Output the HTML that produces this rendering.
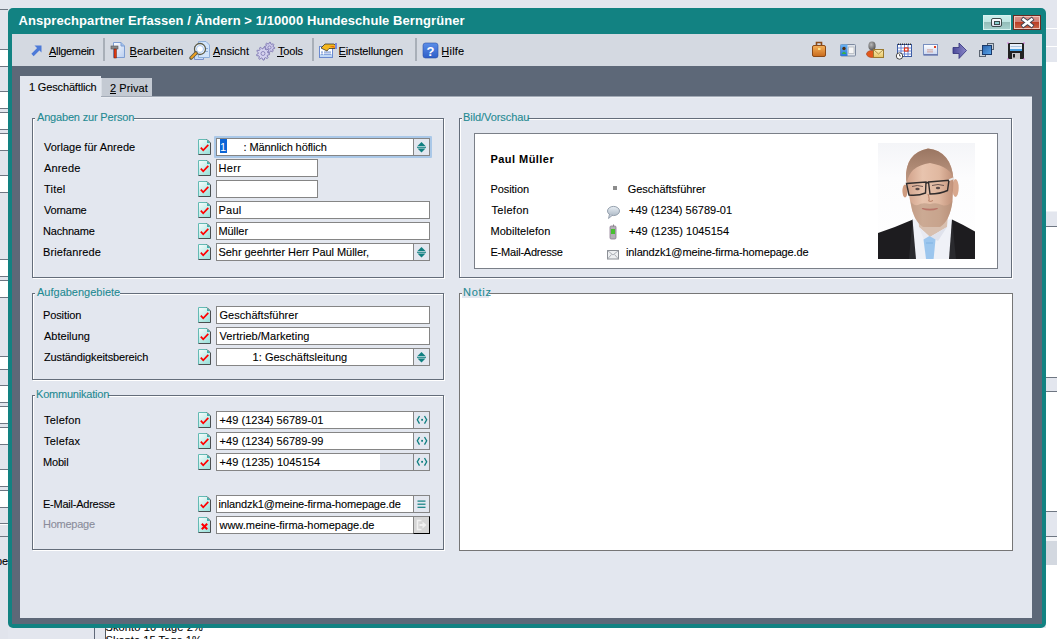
<!DOCTYPE html><html><head><meta charset="utf-8"><style>
html,body{margin:0;padding:0}
body{width:1057px;height:639px;position:relative;overflow:hidden;background:#e3e6ee;font-family:"Liberation Sans",sans-serif;font-size:11px}
.t{position:absolute;white-space:nowrap;line-height:13px;-webkit-text-stroke:0.1px currentColor}
svg{position:absolute;overflow:visible}
</style></head><body>
<div style="position:absolute;left:0px;top:0px;width:8px;height:9px;background:#e3e6ee;"></div>
<div style="position:absolute;left:0px;top:9px;width:8px;height:40px;background:#e1e4ec;"></div>
<div style="position:absolute;left:0px;top:49px;width:8px;height:17px;background:#fff;"></div>
<div style="position:absolute;left:0px;top:66px;width:8px;height:25px;background:#e1e4ec;"></div>
<div style="position:absolute;left:0px;top:91px;width:8px;height:17px;background:#fff;"></div>
<div style="position:absolute;left:0px;top:108px;width:8px;height:4px;background:#e1e4ec;"></div>
<div style="position:absolute;left:0px;top:112px;width:8px;height:17px;background:#fff;"></div>
<div style="position:absolute;left:0px;top:129px;width:8px;height:4px;background:#e1e4ec;"></div>
<div style="position:absolute;left:0px;top:133px;width:8px;height:17px;background:#fff;"></div>
<div style="position:absolute;left:0px;top:150px;width:8px;height:25px;background:#e1e4ec;"></div>
<div style="position:absolute;left:0px;top:175px;width:8px;height:17px;background:#fff;"></div>
<div style="position:absolute;left:0px;top:192px;width:8px;height:67px;background:#e1e4ec;"></div>
<div style="position:absolute;left:0px;top:259px;width:8px;height:17px;background:#fff;"></div>
<div style="position:absolute;left:0px;top:276px;width:8px;height:4px;background:#e1e4ec;"></div>
<div style="position:absolute;left:0px;top:280px;width:8px;height:17px;background:#fff;"></div>
<div style="position:absolute;left:0px;top:297px;width:8px;height:59px;background:#e1e4ec;"></div>
<div style="position:absolute;left:0px;top:356px;width:8px;height:13px;background:#fff;"></div>
<div style="position:absolute;left:0px;top:369px;width:8px;height:16px;background:#e1e4ec;"></div>
<div style="position:absolute;left:0px;top:385px;width:8px;height:17px;background:#fff;"></div>
<div style="position:absolute;left:0px;top:402px;width:8px;height:4px;background:#e1e4ec;"></div>
<div style="position:absolute;left:0px;top:406px;width:8px;height:17px;background:#fff;"></div>
<div style="position:absolute;left:0px;top:423px;width:8px;height:4px;background:#e1e4ec;"></div>
<div style="position:absolute;left:0px;top:427px;width:8px;height:17px;background:#fff;"></div>
<div style="position:absolute;left:0px;top:444px;width:8px;height:25px;background:#e1e4ec;"></div>
<div style="position:absolute;left:0px;top:469px;width:8px;height:17px;background:#fff;"></div>
<div style="position:absolute;left:0px;top:486px;width:8px;height:4px;background:#e1e4ec;"></div>
<div style="position:absolute;left:0px;top:490px;width:8px;height:17px;background:#fff;"></div>
<div style="position:absolute;left:0px;top:507px;width:8px;height:16px;background:#e1e4ec;"></div>
<div style="position:absolute;left:0px;top:523px;width:8px;height:13px;background:#e1e4ec;"></div>
<div style="position:absolute;left:0px;top:536px;width:8px;height:103px;background:#e1e4ec;"></div>
<div style="position:absolute;left:0px;top:9px;width:8px;height:1px;background:#6e7682;"></div>
<div style="position:absolute;left:0px;top:49px;width:8px;height:1px;background:#6e7682;"></div>
<div style="position:absolute;left:0px;top:66px;width:8px;height:1px;background:#6e7682;"></div>
<div style="position:absolute;left:0px;top:91px;width:8px;height:1px;background:#6e7682;"></div>
<div style="position:absolute;left:0px;top:108px;width:8px;height:1px;background:#6e7682;"></div>
<div style="position:absolute;left:0px;top:112px;width:8px;height:1px;background:#6e7682;"></div>
<div style="position:absolute;left:0px;top:129px;width:8px;height:1px;background:#6e7682;"></div>
<div style="position:absolute;left:0px;top:133px;width:8px;height:1px;background:#6e7682;"></div>
<div style="position:absolute;left:0px;top:150px;width:8px;height:1px;background:#6e7682;"></div>
<div style="position:absolute;left:0px;top:175px;width:8px;height:1px;background:#6e7682;"></div>
<div style="position:absolute;left:0px;top:192px;width:8px;height:1px;background:#6e7682;"></div>
<div style="position:absolute;left:0px;top:259px;width:8px;height:1px;background:#6e7682;"></div>
<div style="position:absolute;left:0px;top:276px;width:8px;height:1px;background:#6e7682;"></div>
<div style="position:absolute;left:0px;top:280px;width:8px;height:1px;background:#6e7682;"></div>
<div style="position:absolute;left:0px;top:297px;width:8px;height:1px;background:#6e7682;"></div>
<div style="position:absolute;left:0px;top:356px;width:8px;height:1px;background:#6e7682;"></div>
<div style="position:absolute;left:0px;top:369px;width:8px;height:1px;background:#6e7682;"></div>
<div style="position:absolute;left:0px;top:385px;width:8px;height:1px;background:#6e7682;"></div>
<div style="position:absolute;left:0px;top:402px;width:8px;height:1px;background:#6e7682;"></div>
<div style="position:absolute;left:0px;top:406px;width:8px;height:1px;background:#6e7682;"></div>
<div style="position:absolute;left:0px;top:423px;width:8px;height:1px;background:#6e7682;"></div>
<div style="position:absolute;left:0px;top:427px;width:8px;height:1px;background:#6e7682;"></div>
<div style="position:absolute;left:0px;top:444px;width:8px;height:1px;background:#6e7682;"></div>
<div style="position:absolute;left:0px;top:469px;width:8px;height:1px;background:#6e7682;"></div>
<div style="position:absolute;left:0px;top:486px;width:8px;height:1px;background:#6e7682;"></div>
<div style="position:absolute;left:0px;top:490px;width:8px;height:1px;background:#6e7682;"></div>
<div style="position:absolute;left:0px;top:507px;width:8px;height:1px;background:#6e7682;"></div>
<div style="position:absolute;left:0px;top:523px;width:8px;height:1px;background:#6e7682;"></div>
<div style="position:absolute;left:0px;top:536px;width:8px;height:1px;background:#6e7682;"></div>
<div style="position:absolute;left:0px;top:524px;width:8px;height:1px;background:#fff;"></div>
<div class="t" style="left:-4.00px;top:555.00px;color:#000;font-size:11px;font-weight:normal;letter-spacing:0.000px;">pe</div>
<div style="position:absolute;left:1046px;top:0px;width:11px;height:62px;background:#e3e6ee;"></div>
<div style="position:absolute;left:1046px;top:62px;width:11px;height:149px;background:#fff;"></div>
<div style="position:absolute;left:1046px;top:211px;width:11px;height:15px;background:#e3e6ee;"></div>
<div style="position:absolute;left:1046px;top:227px;width:11px;height:150px;background:#fff;"></div>
<div style="position:absolute;left:1046px;top:378px;width:11px;height:13px;background:#e3e6ee;"></div>
<div style="position:absolute;left:1046px;top:392px;width:11px;height:119px;background:#fff;"></div>
<div style="position:absolute;left:1046px;top:512px;width:11px;height:24px;background:#e3e6ee;"></div>
<div style="position:absolute;left:1046px;top:537px;width:11px;height:4px;background:#f4f5f8;"></div>
<div style="position:absolute;left:1046px;top:541px;width:11px;height:24px;background:#d3d8e0;"></div>
<div style="position:absolute;left:1046px;top:565px;width:11px;height:74px;background:#fff;"></div>
<div style="position:absolute;left:1046px;top:28px;width:11px;height:1px;background:#fff;"></div>
<div style="position:absolute;left:1046px;top:46px;width:11px;height:1px;background:#fff;"></div>
<div style="position:absolute;left:1046px;top:211px;width:11px;height:1px;background:#f0f2f6;"></div>
<div style="position:absolute;left:1046px;top:226px;width:11px;height:1px;background:#6e7682;"></div>
<div style="position:absolute;left:1046px;top:377px;width:11px;height:1px;background:#6e7682;"></div>
<div style="position:absolute;left:1046px;top:391px;width:11px;height:1px;background:#6e7682;"></div>
<div style="position:absolute;left:1046px;top:511px;width:11px;height:1px;background:#6e7682;"></div>
<div style="position:absolute;left:1046px;top:536px;width:11px;height:1px;background:#6e7682;"></div>
<div style="position:absolute;left:105px;top:628px;width:952px;height:11px;background:#fff;"></div>
<div style="position:absolute;left:94px;top:628px;width:1px;height:11px;background:#606878;"></div>
<div style="position:absolute;left:105px;top:628px;width:1px;height:11px;background:#505860;"></div>
<div class="t" style="left:105.50px;top:621.00px;color:#000;font-size:11px;font-weight:normal;letter-spacing:0.125px;">Skonto 10 Tage 2%</div>
<div class="t" style="left:105.50px;top:634.00px;color:#000;font-size:11px;font-weight:normal;letter-spacing:0.062px;">Skonto 15 Tage 1%</div>
<div style="position:absolute;left:8px;top:8px;width:1038px;height:620px;background:#128282;border-radius:5px"></div>
<div style="position:absolute;left:12px;top:34px;width:1030px;height:32px;background:#d4d9e1;"></div>
<div style="position:absolute;left:12px;top:66px;width:1030px;height:558px;background:#5d6878;"></div>
<div style="position:absolute;left:20px;top:96px;width:1012px;height:522px;background:#e3e7ef;"></div>
<div style="position:absolute;left:20px;top:76px;width:81px;height:20px;background:#e3e7ef;"></div>
<div style="position:absolute;left:101px;top:78px;width:51px;height:18px;background:#c4cad3;"></div>
<div style="position:absolute;left:101px;top:96px;width:931px;height:1px;background:#a2aab6;"></div>
<div style="position:absolute;left:101px;top:97px;width:931px;height:1px;background:#eaedf3;"></div>
<div style="position:absolute;left:101px;top:78px;width:1px;height:18px;background:#d8dde4;"></div>
<div class="t" style="left:29.00px;top:81.00px;color:#000;font-size:11px;font-weight:normal;letter-spacing:-0.154px;">1 Geschäftlich</div>
<div class="t" style="left:110.00px;top:82.00px;color:#000;font-size:11px;font-weight:normal;letter-spacing:0.071px;">2 Privat</div>
<div style="position:absolute;left:110px;top:93px;width:6px;height:1px;background:#000;"></div>
<div class="t" style="left:18.50px;top:14.00px;color:#fff;font-size:13px;font-weight:bold;letter-spacing:0.077px;-webkit-text-stroke:0">Ansprechpartner Erfassen / Ändern &gt; 1/10000 Hundeschule Berngrüner</div>
<div style="position:absolute;left:983px;top:15px;width:26px;height:13px;border:1px solid #d6f2f0;background:linear-gradient(#c9eeeb 0,#c0e6e3 45%,#93bdb9 50%,#a6d0cc 100%)"></div>
<div style="position:absolute;left:991px;top:18px;width:9px;height:7px;border:1px solid #3c4a4a;border-radius:2px;background:linear-gradient(#fff,#dde)"></div>
<div style="position:absolute;left:994px;top:21px;width:4px;height:2px;border:1px solid #3c4a4a;background:#8cc"></div>
<div style="position:absolute;left:1013px;top:15px;width:26px;height:13px;border:1px solid #6b2a22;box-shadow:inset 0 0 0 1px #f2c6bc;background:linear-gradient(#dc958c 0,#d08078 45%,#bb3e26 50%,#c8664c 100%)"></div>
<svg style="left:1022px;top:18px" width="11" height="9" viewBox="0 0 11 9"><path d="M1.5 1.5 L9.5 7.5 M9.5 1.5 L1.5 7.5" stroke="#3a4050" stroke-width="4.2" stroke-linecap="square"/><path d="M1.5 1.5 L9.5 7.5 M9.5 1.5 L1.5 7.5" stroke="#fff" stroke-width="2.6" stroke-linecap="square"/></svg>
<div style="position:absolute;left:103px;top:38px;width:2px;height:23px;background:#a8afb8;"></div>
<div style="position:absolute;left:312px;top:38px;width:2px;height:23px;background:#a8afb8;"></div>
<div style="position:absolute;left:415px;top:38px;width:2px;height:23px;background:#a8afb8;"></div>
<div class="t" style="left:49.00px;top:45.00px;color:#000;font-size:11px;font-weight:normal;letter-spacing:-0.325px;">Allgemein</div>
<div style="position:absolute;left:49px;top:56px;width:7px;height:1px;background:#000;"></div>
<div class="t" style="left:129.50px;top:45.00px;color:#000;font-size:11px;font-weight:normal;letter-spacing:0.067px;">Bearbeiten</div>
<div style="position:absolute;left:130px;top:56px;width:7px;height:1px;background:#000;"></div>
<div class="t" style="left:213.00px;top:45.00px;color:#000;font-size:11px;font-weight:normal;letter-spacing:-0.017px;">Ansicht</div>
<div style="position:absolute;left:213px;top:56px;width:7px;height:1px;background:#000;"></div>
<div class="t" style="left:278.00px;top:45.00px;color:#000;font-size:11px;font-weight:normal;letter-spacing:-0.200px;">Tools</div>
<div style="position:absolute;left:277px;top:56px;width:7px;height:1px;background:#000;"></div>
<div class="t" style="left:338.50px;top:45.00px;color:#000;font-size:11px;font-weight:normal;letter-spacing:-0.117px;">Einstellungen</div>
<div style="position:absolute;left:339px;top:56px;width:7px;height:1px;background:#000;"></div>
<div class="t" style="left:441.30px;top:45.00px;color:#000;font-size:11px;font-weight:normal;letter-spacing:0.225px;">Hilfe</div>
<div style="position:absolute;left:442px;top:56px;width:7px;height:1px;background:#000;"></div>
<svg style="left:30px;top:44px" width="13" height="13" viewBox="0 0 13 13"><path d="M2.5 11 L10 3.5" stroke="#4d7ad8" stroke-width="3.2" fill="none"/><path d="M4.5 1.5 H11.5 V8.5Z" fill="#4d7ad8"/></svg>
<svg style="left:110px;top:41px" width="17" height="18" viewBox="0 0 17 18"><defs><linearGradient id="bd" x1="0" y1="0" x2="1" y2="1"><stop offset="0" stop-color="#ffffff"/><stop offset="1" stop-color="#b8cef0"/></linearGradient></defs>
<path d="M3.5 1.5 H11 L14.5 5 V16.5 H3.5Z" fill="url(#bd)" stroke="#7e9ed2"/><path d="M11 1.5 V5 H14.5" fill="#9fc0ee" stroke="#7e9ed2"/>
<rect x="1" y="5" width="7" height="3" fill="#8a8a8a" stroke="#555" stroke-width="0.6"/><rect x="4" y="8" width="2.4" height="9" fill="#e03a10" stroke="#6a1a08" stroke-width="0.5"/></svg>
<svg style="left:189px;top:40px" width="24" height="21" viewBox="0 0 24 21"><path d="M5.5 6.5 H14.5 V19.5 H5.5Z" fill="#c4daf6" stroke="#7c90c8"/><path d="M9.5 1.5 H17 L20.5 5 V17.5 H9.5Z" fill="#d2e4fa" stroke="#8eaed8"/>
<rect x="16" y="8" width="3" height="1" fill="#8eaed8"/><rect x="16" y="11" width="3" height="1" fill="#8eaed8"/>
<circle cx="11" cy="9" r="5.5" fill="#f4f8ff" stroke="#5a5a48" stroke-width="1.3"/><circle cx="11" cy="9" r="3.5" fill="#fff" stroke="#a8c8f0" stroke-width="1"/>
<path d="M2 18 L7 13" stroke="#5a5a48" stroke-width="3.6" stroke-linecap="round"/><path d="M2.4 17.6 L6.8 13.2" stroke="#f0a020" stroke-width="2" stroke-linecap="round"/></svg>
<svg style="left:255px;top:40px" width="22" height="22" viewBox="0 0 22 22"><polygon points="19.70,7.50 19.60,8.51 17.96,8.93 17.61,9.58 18.18,11.18 17.39,11.82 15.93,10.96 15.23,11.17 14.50,12.70 13.49,12.60 13.07,10.96 12.42,10.61 10.82,11.18 10.18,10.39 11.04,8.93 10.83,8.23 9.30,7.50 9.40,6.49 11.04,6.07 11.39,5.42 10.82,3.82 11.61,3.18 13.07,4.04 13.77,3.83 14.50,2.30 15.51,2.40 15.93,4.04 16.58,4.39 18.18,3.82 18.82,4.61 17.96,6.07 18.17,6.77" fill="#cdcaea" stroke="#7a74b0" stroke-width="0.9"/><circle cx="14.5" cy="7.5" r="1.56" fill="#d8d6ee" stroke="#7a74b0" stroke-width="0.8"/><polygon points="14.60,13.50 14.50,14.65 12.47,15.13 12.12,15.88 13.06,17.74 12.24,18.56 10.38,17.62 9.63,17.97 9.15,20.00 8.00,20.10 7.17,18.18 6.37,17.97 4.70,19.22 3.76,18.56 4.36,16.55 3.88,15.88 1.80,15.76 1.50,14.65 3.25,13.50 3.32,12.67 1.80,11.24 2.28,10.20 4.36,10.45 4.95,9.86 4.70,7.78 5.74,7.30 7.17,8.82 8.00,8.75 9.15,7.00 10.26,7.30 10.38,9.38 11.05,9.86 13.06,9.26 13.72,10.20 12.47,11.87 12.68,12.67" fill="#d4d2ee" stroke="#7a74b0" stroke-width="0.9"/><circle cx="8" cy="13.5" r="1.98" fill="#d8d6ee" stroke="#7a74b0" stroke-width="0.8"/></svg>
<svg style="left:318px;top:42px" width="20" height="17" viewBox="0 0 20 17"><rect x="1.5" y="4.5" width="13" height="11" fill="#fff" stroke="#6a8ad0"/><rect x="2" y="12" width="12" height="3" fill="#c0d8f4"/>
<rect x="3" y="9.5" width="2" height="1.2" fill="#7a9ad8"/><rect x="6" y="9.5" width="7" height="1.2" fill="#7a9ad8"/><rect x="3" y="11.6" width="2" height="1.2" fill="#7a9ad8"/><rect x="6" y="11.6" width="7" height="1.2" fill="#7a9ad8"/>
<path d="M3 6 L7 2 H16 L18 4 V6.5 H11 L9 9 Z" fill="#f4b820" stroke="#222" stroke-width="0.7"/><path d="M11 4 L16 4 L17 6" fill="#e86a10"/><rect x="17" y="1" width="2" height="6" fill="#7a8ae0"/></svg>
<svg style="left:422px;top:42px" width="17" height="17" viewBox="0 0 17 17"><defs><linearGradient id="hg" x1="0" y1="0" x2="0" y2="1"><stop offset="0" stop-color="#5c8ee8"/><stop offset="1" stop-color="#2f5fc8"/></linearGradient></defs>
<rect x="1" y="1" width="15" height="15" rx="2.5" fill="url(#hg)" stroke="#2a50a8" stroke-width="0.6"/>
<text x="8.5" y="13.6" text-anchor="middle" font-family="Liberation Sans" font-weight="bold" font-size="13" fill="#fff">?</text></svg>
<svg style="left:810px;top:40px" width="18" height="19" viewBox="0 0 18 19"><defs><linearGradient id="bc" x1="0" y1="0" x2="0" y2="1"><stop offset="0" stop-color="#f6b25a"/><stop offset="1" stop-color="#c86a1c"/></linearGradient></defs>
<path d="M6.5 5 V2.5 H11.5 V5" stroke="#8a4a18" stroke-width="1.6" fill="none"/>
<rect x="2.5" y="5.5" width="13" height="11" rx="1.5" fill="url(#bc)" stroke="#8a4a18"/><rect x="8" y="8" width="2.5" height="2" fill="#f8e088"/></svg>
<svg style="left:839px;top:43px" width="18" height="15" viewBox="0 0 18 15"><defs><linearGradient id="cd" x1="0" y1="0" x2="0" y2="1"><stop offset="0" stop-color="#6ab4f4"/><stop offset="1" stop-color="#2a78d8"/></linearGradient></defs>
<rect x="1.5" y="1.5" width="15" height="11.5" rx="1" fill="#dfe3ea" stroke="#7d8aa0"/><rect x="1.5" y="1.5" width="7" height="11.5" fill="url(#cd)"/>
<circle cx="5" cy="5.5" r="1.7" fill="#503010"/><path d="M2.6 11 Q5 6.5 7.4 11Z" fill="#38b048"/><rect x="9.5" y="4" width="5.5" height="6.5" fill="#f6f6f6" stroke="#a0a8b0" stroke-width="0.6"/></svg>
<svg style="left:865px;top:40px" width="20" height="20" viewBox="0 0 20 20"><defs><linearGradient id="ev" x1="0" y1="0" x2="0" y2="1"><stop offset="0" stop-color="#fcefb8"/><stop offset="1" stop-color="#e6c464"/></linearGradient>
<radialGradient id="ph" cx="0.4" cy="0.35" r="0.7"><stop offset="0" stop-color="#b8b8b8"/><stop offset="1" stop-color="#505050"/></radialGradient></defs>
<ellipse cx="7" cy="14" rx="5.5" ry="3.5" fill="#e2581c" stroke="#a03a10" stroke-width="0.6"/>
<ellipse cx="7" cy="6" rx="3.6" ry="4.4" fill="url(#ph)"/>
<rect x="8.5" y="9.5" width="10" height="8" fill="url(#ev)" stroke="#9a7a30"/><path d="M8.5 9.5 L13.5 14 L18.5 9.5" stroke="#9a7a30" fill="none" stroke-width="0.8"/></svg>
<svg style="left:895px;top:41px" width="18" height="19" viewBox="0 0 18 19"><rect x="2.5" y="3.5" width="14" height="12" fill="#fff" stroke="#3a5aa0"/>
<path d="M2.5 7 H16.5 M2.5 10 H16.5 M2.5 13 H16.5 M6 3.5 V15.5 M9.5 3.5 V15.5 M13 3.5 V15.5" stroke="#5a7ad0" stroke-width="0.9"/>
<path d="M3.5 2.5 V4 M5.5 2.5 V4 M7.5 2.5 V4 M9.5 2.5 V4 M11.5 2.5 V4 M13.5 2.5 V4 M15.5 2.5 V4" stroke="#222" stroke-width="0.9"/>
<rect x="9.5" y="7" width="3.5" height="3" fill="#fff" stroke="#e03010" stroke-width="1.2"/>
<circle cx="4.5" cy="15" r="3.2" fill="#fff" stroke="#333" stroke-width="0.9"/><path d="M4.5 13 V15 H6" stroke="#333" stroke-width="0.7" fill="none"/></svg>
<svg style="left:922px;top:43px" width="18" height="15" viewBox="0 0 18 15"><defs><linearGradient id="lt" x1="0" y1="0" x2="0" y2="1"><stop offset="0" stop-color="#ffffff"/><stop offset="1" stop-color="#c8d6f0"/></linearGradient></defs>
<rect x="1.5" y="1.5" width="14" height="10.5" fill="url(#lt)" stroke="#7890c0"/><rect x="2" y="11" width="14" height="1.5" fill="#6a7ab0"/>
<rect x="12" y="3" width="2" height="2" fill="#e04020"/><rect x="5" y="6.5" width="6" height="0.8" fill="#d09080"/><rect x="5" y="8.5" width="6" height="0.8" fill="#d09080"/></svg>
<svg style="left:952px;top:42px" width="16" height="18" viewBox="0 0 16 18"><defs><linearGradient id="ar" x1="0" y1="0" x2="1" y2="0"><stop offset="0" stop-color="#4a4a98"/><stop offset="1" stop-color="#8a86c8"/></linearGradient></defs>
<path d="M1 5.5 H7 V1 L14.5 8.5 L7 16.5 V11.5 H1Z" fill="url(#ar)" stroke="#30307a" stroke-width="0.8"/></svg>
<svg style="left:978px;top:42px" width="18" height="16" viewBox="0 0 18 16"><rect x="9.5" y="1.5" width="6" height="6" fill="#c8d0d8" stroke="#5a6470"/><rect x="1.5" y="8.5" width="6" height="6" fill="#c8d0d8" stroke="#5a6470"/>
<defs><linearGradient id="wb" x1="0" y1="0" x2="1" y2="1"><stop offset="0" stop-color="#2a60a8"/><stop offset="1" stop-color="#5aa8ec"/></linearGradient></defs>
<rect x="4.5" y="3.5" width="9" height="9" fill="url(#wb)" stroke="#1a3a6a"/></svg>
<svg style="left:1007px;top:42px" width="18" height="18" viewBox="0 0 18 18"><rect x="1" y="1" width="16" height="16" rx="1" fill="#222"/><rect x="3" y="2" width="12" height="7" fill="#e8f0fa"/><rect x="3" y="7" width="12" height="2" fill="#48a0e0"/>
<rect x="3.5" y="4" width="11" height="0.8" fill="#9ab8d8"/><rect x="5" y="11" width="8" height="6" fill="#c8c8c8"/><rect x="6" y="12" width="2" height="3.5" fill="#222"/>
<rect x="0.5" y="0.5" width="1" height="1" fill="#e020e0"/><rect x="16.5" y="16.5" width="1" height="1" fill="#e020e0"/><rect x="0.5" y="16.5" width="1" height="1" fill="#e020e0"/><rect x="16.5" y="0.5" width="1" height="1" fill="#e020e0"/></svg>
<div style="position:absolute;left:32px;top:118px;width:410px;height:158px;border:1px solid #646d7a;box-shadow:inset 1px 1px 0 #fff, 1px 1px 0 #fff"></div>
<div style="position:absolute;left:35px;top:112px;width:99px;height:9px;background:#e3e7ef;"></div>
<div class="t" style="left:37.00px;top:111.00px;color:#1f8a92;font-size:11px;font-weight:normal;letter-spacing:-0.176px;-webkit-text-stroke:0.1px currentColor">Angaben zur Person</div>
<div style="position:absolute;left:32px;top:293px;width:410px;height:85px;border:1px solid #646d7a;box-shadow:inset 1px 1px 0 #fff, 1px 1px 0 #fff"></div>
<div style="position:absolute;left:35px;top:287px;width:85px;height:9px;background:#e3e7ef;"></div>
<div class="t" style="left:37.00px;top:286.00px;color:#1f8a92;font-size:11px;font-weight:normal;letter-spacing:0.000px;-webkit-text-stroke:0.1px currentColor">Aufgabengebiete</div>
<div style="position:absolute;left:32px;top:395px;width:410px;height:153px;border:1px solid #646d7a;box-shadow:inset 1px 1px 0 #fff, 1px 1px 0 #fff"></div>
<div style="position:absolute;left:35px;top:389px;width:73px;height:9px;background:#e3e7ef;"></div>
<div class="t" style="left:36.00px;top:388.00px;color:#1f8a92;font-size:11px;font-weight:normal;letter-spacing:-0.208px;-webkit-text-stroke:0.1px currentColor">Kommunikation</div>
<div style="position:absolute;left:459px;top:118px;width:551px;height:158px;border:1px solid #646d7a;box-shadow:inset 1px 1px 0 #fff, 1px 1px 0 #fff"></div>
<div style="position:absolute;left:462px;top:112px;width:66px;height:9px;background:#e3e7ef;"></div>
<div class="t" style="left:463.00px;top:111.00px;color:#1f8a92;font-size:11px;font-weight:normal;letter-spacing:-0.067px;-webkit-text-stroke:0.1px currentColor">Bild/Vorschau</div>
<div style="position:absolute;left:459px;top:293px;width:552px;height:256px;border:1px solid #767676;background:#fff"></div>
<div style="position:absolute;left:462px;top:287px;width:27px;height:11px;background:#e3e7ef;"></div>
<div class="t" style="left:463.00px;top:286.00px;color:#1f8a92;font-size:11px;font-weight:normal;letter-spacing:0.750px;-webkit-text-stroke:0.1px currentColor">Notiz</div>
<svg width="0" height="0"><defs><linearGradient id="cg" x1="0" y1="0" x2="0.6" y2="1"><stop offset="0" stop-color="#fdfefe"/><stop offset="1" stop-color="#9fe2dc"/></linearGradient></defs></svg>
<div style="position:absolute;left:214px;top:136px;width:218px;height:22px;background:#aac8e8;border-radius:1px"></div>
<div class="t" style="left:44.00px;top:140.50px;color:#000;font-size:11px;font-weight:normal;letter-spacing:0.000px;">Vorlage für Anrede</div>
<svg style="left:198px;top:139px" width="14" height="17" viewBox="0 0 14 17">
<path d="M0 0 H9 L13 4 V16 H0Z" fill="url(#cg)"/>
<path d="M0.5 15.5 V0.5 H9" stroke="#64bab4" fill="none"/>
<path d="M9 0.5 L12.5 4 V15.5 H0.5" stroke="#4a4e50" fill="none"/>
<path d="M9 1 L12 4 H9Z" fill="#3ab2ae"/>
<path d="M2.8 8.6 L5.2 11.3 L10.3 5.8" stroke="#f00" stroke-width="1.7" fill="none"/></svg>
<div style="position:absolute;left:216px;top:138px;width:212px;height:16px;border:1px solid #858585;background:#fff"></div>
<div style="position:absolute;left:413px;top:138px;width:15px;height:16px;border:1px solid #858585;background:#e3e7ef"></div>
<svg style="left:414px;top:139px" width="16" height="16" viewBox="0 0 16 16"><path d="M3.5 7 L7.5 3 L11.5 7Z M3.5 9.5 L7.5 13.5 L11.5 9.5Z" fill="#0f7f80"/><rect x="3" y="7.7" width="9" height="1.1" fill="#0f7f80"/></svg>
<div style="position:absolute;left:220px;top:139px;width:7px;height:14px;background:#0a64d6;"></div>
<div class="t" style="left:220.00px;top:140.50px;color:#fff;font-size:11px;font-weight:normal;letter-spacing:0.000px;-webkit-text-stroke:0">1</div>
<div class="t" style="left:243.60px;top:140.50px;color:#000;font-size:11px;font-weight:normal;letter-spacing:-0.106px;">: Männlich höflich</div>
<div class="t" style="left:44.00px;top:161.50px;color:#000;font-size:11px;font-weight:normal;letter-spacing:0.160px;">Anrede</div>
<svg style="left:198px;top:160px" width="14" height="17" viewBox="0 0 14 17">
<path d="M0 0 H9 L13 4 V16 H0Z" fill="url(#cg)"/>
<path d="M0.5 15.5 V0.5 H9" stroke="#64bab4" fill="none"/>
<path d="M9 0.5 L12.5 4 V15.5 H0.5" stroke="#4a4e50" fill="none"/>
<path d="M9 1 L12 4 H9Z" fill="#3ab2ae"/>
<path d="M2.8 8.6 L5.2 11.3 L10.3 5.8" stroke="#f00" stroke-width="1.7" fill="none"/></svg>
<div style="position:absolute;left:216px;top:159px;width:100px;height:16px;border:1px solid #858585;background:#fff"></div>
<div class="t" style="left:218.50px;top:161.50px;color:#000;font-size:11px;font-weight:normal;letter-spacing:0.367px;">Herr</div>
<div class="t" style="left:44.00px;top:182.50px;color:#000;font-size:11px;font-weight:normal;letter-spacing:0.200px;">Titel</div>
<svg style="left:198px;top:181px" width="14" height="17" viewBox="0 0 14 17">
<path d="M0 0 H9 L13 4 V16 H0Z" fill="url(#cg)"/>
<path d="M0.5 15.5 V0.5 H9" stroke="#64bab4" fill="none"/>
<path d="M9 0.5 L12.5 4 V15.5 H0.5" stroke="#4a4e50" fill="none"/>
<path d="M9 1 L12 4 H9Z" fill="#3ab2ae"/>
<path d="M2.8 8.6 L5.2 11.3 L10.3 5.8" stroke="#f00" stroke-width="1.7" fill="none"/></svg>
<div style="position:absolute;left:216px;top:180px;width:100px;height:16px;border:1px solid #858585;background:#fff"></div>
<div class="t" style="left:44.00px;top:203.50px;color:#000;font-size:11px;font-weight:normal;letter-spacing:-0.217px;">Vorname</div>
<svg style="left:198px;top:202px" width="14" height="17" viewBox="0 0 14 17">
<path d="M0 0 H9 L13 4 V16 H0Z" fill="url(#cg)"/>
<path d="M0.5 15.5 V0.5 H9" stroke="#64bab4" fill="none"/>
<path d="M9 0.5 L12.5 4 V15.5 H0.5" stroke="#4a4e50" fill="none"/>
<path d="M9 1 L12 4 H9Z" fill="#3ab2ae"/>
<path d="M2.8 8.6 L5.2 11.3 L10.3 5.8" stroke="#f00" stroke-width="1.7" fill="none"/></svg>
<div style="position:absolute;left:216px;top:201px;width:212px;height:16px;border:1px solid #858585;background:#fff"></div>
<div class="t" style="left:218.50px;top:203.50px;color:#000;font-size:11px;font-weight:normal;letter-spacing:0.233px;">Paul</div>
<div class="t" style="left:43.00px;top:224.50px;color:#000;font-size:11px;font-weight:normal;letter-spacing:-0.200px;">Nachname</div>
<svg style="left:198px;top:223px" width="14" height="17" viewBox="0 0 14 17">
<path d="M0 0 H9 L13 4 V16 H0Z" fill="url(#cg)"/>
<path d="M0.5 15.5 V0.5 H9" stroke="#64bab4" fill="none"/>
<path d="M9 0.5 L12.5 4 V15.5 H0.5" stroke="#4a4e50" fill="none"/>
<path d="M9 1 L12 4 H9Z" fill="#3ab2ae"/>
<path d="M2.8 8.6 L5.2 11.3 L10.3 5.8" stroke="#f00" stroke-width="1.7" fill="none"/></svg>
<div style="position:absolute;left:216px;top:222px;width:212px;height:16px;border:1px solid #858585;background:#fff"></div>
<div class="t" style="left:218.50px;top:224.50px;color:#000;font-size:11px;font-weight:normal;letter-spacing:-0.080px;">Müller</div>
<div class="t" style="left:43.00px;top:245.50px;color:#000;font-size:11px;font-weight:normal;letter-spacing:0.100px;">Briefanrede</div>
<svg style="left:198px;top:244px" width="14" height="17" viewBox="0 0 14 17">
<path d="M0 0 H9 L13 4 V16 H0Z" fill="url(#cg)"/>
<path d="M0.5 15.5 V0.5 H9" stroke="#64bab4" fill="none"/>
<path d="M9 0.5 L12.5 4 V15.5 H0.5" stroke="#4a4e50" fill="none"/>
<path d="M9 1 L12 4 H9Z" fill="#3ab2ae"/>
<path d="M2.8 8.6 L5.2 11.3 L10.3 5.8" stroke="#f00" stroke-width="1.7" fill="none"/></svg>
<div style="position:absolute;left:216px;top:243px;width:212px;height:16px;border:1px solid #858585;background:#fff"></div>
<div style="position:absolute;left:413px;top:243px;width:15px;height:16px;border:1px solid #858585;background:#e3e7ef"></div>
<svg style="left:414px;top:244px" width="16" height="16" viewBox="0 0 16 16"><path d="M3.5 7 L7.5 3 L11.5 7Z M3.5 9.5 L7.5 13.5 L11.5 9.5Z" fill="#0f7f80"/><rect x="3" y="7.7" width="9" height="1.1" fill="#0f7f80"/></svg>
<div class="t" style="left:218.50px;top:245.50px;color:#000;font-size:11px;font-weight:normal;letter-spacing:-0.057px;">Sehr geehrter Herr Paul Müller,</div>
<div class="t" style="left:43.00px;top:308.50px;color:#000;font-size:11px;font-weight:normal;letter-spacing:-0.114px;">Position</div>
<svg style="left:198px;top:307px" width="14" height="17" viewBox="0 0 14 17">
<path d="M0 0 H9 L13 4 V16 H0Z" fill="url(#cg)"/>
<path d="M0.5 15.5 V0.5 H9" stroke="#64bab4" fill="none"/>
<path d="M9 0.5 L12.5 4 V15.5 H0.5" stroke="#4a4e50" fill="none"/>
<path d="M9 1 L12 4 H9Z" fill="#3ab2ae"/>
<path d="M2.8 8.6 L5.2 11.3 L10.3 5.8" stroke="#f00" stroke-width="1.7" fill="none"/></svg>
<div style="position:absolute;left:216px;top:306px;width:212px;height:16px;border:1px solid #858585;background:#fff"></div>
<div class="t" style="left:219.50px;top:308.50px;color:#000;font-size:11px;font-weight:normal;letter-spacing:0.021px;">Geschäftsführer</div>
<div class="t" style="left:44.00px;top:329.50px;color:#000;font-size:11px;font-weight:normal;letter-spacing:0.000px;">Abteilung</div>
<svg style="left:198px;top:328px" width="14" height="17" viewBox="0 0 14 17">
<path d="M0 0 H9 L13 4 V16 H0Z" fill="url(#cg)"/>
<path d="M0.5 15.5 V0.5 H9" stroke="#64bab4" fill="none"/>
<path d="M9 0.5 L12.5 4 V15.5 H0.5" stroke="#4a4e50" fill="none"/>
<path d="M9 1 L12 4 H9Z" fill="#3ab2ae"/>
<path d="M2.8 8.6 L5.2 11.3 L10.3 5.8" stroke="#f00" stroke-width="1.7" fill="none"/></svg>
<div style="position:absolute;left:216px;top:327px;width:212px;height:16px;border:1px solid #858585;background:#fff"></div>
<div class="t" style="left:219.50px;top:329.50px;color:#000;font-size:11px;font-weight:normal;letter-spacing:0.041px;">Vertrieb/Marketing</div>
<div class="t" style="left:44.00px;top:350.50px;color:#000;font-size:11px;font-weight:normal;letter-spacing:-0.135px;">Zuständigkeitsbereich</div>
<svg style="left:198px;top:349px" width="14" height="17" viewBox="0 0 14 17">
<path d="M0 0 H9 L13 4 V16 H0Z" fill="url(#cg)"/>
<path d="M0.5 15.5 V0.5 H9" stroke="#64bab4" fill="none"/>
<path d="M9 0.5 L12.5 4 V15.5 H0.5" stroke="#4a4e50" fill="none"/>
<path d="M9 1 L12 4 H9Z" fill="#3ab2ae"/>
<path d="M2.8 8.6 L5.2 11.3 L10.3 5.8" stroke="#f00" stroke-width="1.7" fill="none"/></svg>
<div style="position:absolute;left:216px;top:348px;width:212px;height:16px;border:1px solid #858585;background:#fff"></div>
<div style="position:absolute;left:413px;top:348px;width:15px;height:16px;border:1px solid #858585;background:#e3e7ef"></div>
<svg style="left:414px;top:349px" width="16" height="16" viewBox="0 0 16 16"><path d="M3.5 7 L7.5 3 L11.5 7Z M3.5 9.5 L7.5 13.5 L11.5 9.5Z" fill="#0f7f80"/><rect x="3" y="7.7" width="9" height="1.1" fill="#0f7f80"/></svg>
<div class="t" style="left:252.60px;top:350.50px;color:#000;font-size:11px;font-weight:normal;letter-spacing:0.022px;">1: Geschäftsleitung</div>
<div class="t" style="left:44.00px;top:413.50px;color:#000;font-size:11px;font-weight:normal;letter-spacing:0.200px;">Telefon</div>
<svg style="left:198px;top:412px" width="14" height="17" viewBox="0 0 14 17">
<path d="M0 0 H9 L13 4 V16 H0Z" fill="url(#cg)"/>
<path d="M0.5 15.5 V0.5 H9" stroke="#64bab4" fill="none"/>
<path d="M9 0.5 L12.5 4 V15.5 H0.5" stroke="#4a4e50" fill="none"/>
<path d="M9 1 L12 4 H9Z" fill="#3ab2ae"/>
<path d="M2.8 8.6 L5.2 11.3 L10.3 5.8" stroke="#f00" stroke-width="1.7" fill="none"/></svg>
<div style="position:absolute;left:216px;top:411px;width:212px;height:16px;border:1px solid #858585;background:#fff"></div>
<div style="position:absolute;left:413px;top:411px;width:15px;height:16px;border:1px solid #858585;background:#e3e7ef"></div>
<svg style="left:414px;top:412px" width="16" height="16" viewBox="0 0 16 16"><path d="M5.5 4 L3.3 7.8 L5.5 11.6 M10.5 4 L12.7 7.8 L10.5 11.6" stroke="#0f7f80" stroke-width="1.3" fill="none"/><rect x="7.2" y="6.9" width="1.8" height="1.8" fill="#0f7f80"/></svg>
<div class="t" style="left:219.50px;top:413.50px;color:#000;font-size:11px;font-weight:normal;letter-spacing:0.050px;">+49 (1234) 56789-01</div>
<div class="t" style="left:44.00px;top:434.50px;color:#000;font-size:11px;font-weight:normal;letter-spacing:0.200px;">Telefax</div>
<svg style="left:198px;top:433px" width="14" height="17" viewBox="0 0 14 17">
<path d="M0 0 H9 L13 4 V16 H0Z" fill="url(#cg)"/>
<path d="M0.5 15.5 V0.5 H9" stroke="#64bab4" fill="none"/>
<path d="M9 0.5 L12.5 4 V15.5 H0.5" stroke="#4a4e50" fill="none"/>
<path d="M9 1 L12 4 H9Z" fill="#3ab2ae"/>
<path d="M2.8 8.6 L5.2 11.3 L10.3 5.8" stroke="#f00" stroke-width="1.7" fill="none"/></svg>
<div style="position:absolute;left:216px;top:432px;width:212px;height:16px;border:1px solid #858585;background:#fff"></div>
<div style="position:absolute;left:413px;top:432px;width:15px;height:16px;border:1px solid #858585;background:#e3e7ef"></div>
<svg style="left:414px;top:433px" width="16" height="16" viewBox="0 0 16 16"><path d="M5.5 4 L3.3 7.8 L5.5 11.6 M10.5 4 L12.7 7.8 L10.5 11.6" stroke="#0f7f80" stroke-width="1.3" fill="none"/><rect x="7.2" y="6.9" width="1.8" height="1.8" fill="#0f7f80"/></svg>
<div class="t" style="left:219.50px;top:434.50px;color:#000;font-size:11px;font-weight:normal;letter-spacing:0.050px;">+49 (1234) 56789-99</div>
<div class="t" style="left:43.00px;top:455.50px;color:#000;font-size:11px;font-weight:normal;letter-spacing:-0.175px;">Mobil</div>
<svg style="left:198px;top:454px" width="14" height="17" viewBox="0 0 14 17">
<path d="M0 0 H9 L13 4 V16 H0Z" fill="url(#cg)"/>
<path d="M0.5 15.5 V0.5 H9" stroke="#64bab4" fill="none"/>
<path d="M9 0.5 L12.5 4 V15.5 H0.5" stroke="#4a4e50" fill="none"/>
<path d="M9 1 L12 4 H9Z" fill="#3ab2ae"/>
<path d="M2.8 8.6 L5.2 11.3 L10.3 5.8" stroke="#f00" stroke-width="1.7" fill="none"/></svg>
<div style="position:absolute;left:216px;top:453px;width:212px;height:16px;border:1px solid #858585;background:#fff"></div>
<div style="position:absolute;left:413px;top:453px;width:15px;height:16px;border:1px solid #858585;background:#e3e7ef"></div>
<svg style="left:414px;top:454px" width="16" height="16" viewBox="0 0 16 16"><path d="M5.5 4 L3.3 7.8 L5.5 11.6 M10.5 4 L12.7 7.8 L10.5 11.6" stroke="#0f7f80" stroke-width="1.3" fill="none"/><rect x="7.2" y="6.9" width="1.8" height="1.8" fill="#0f7f80"/></svg>
<div class="t" style="left:219.50px;top:455.50px;color:#000;font-size:11px;font-weight:normal;letter-spacing:0.076px;">+49 (1235) 1045154</div>
<div style="position:absolute;left:380px;top:454px;width:33px;height:16px;background:#e3e7ef;"></div>
<div class="t" style="left:43.00px;top:497.50px;color:#000;font-size:11px;font-weight:normal;letter-spacing:-0.238px;">E-Mail-Adresse</div>
<svg style="left:198px;top:496px" width="14" height="17" viewBox="0 0 14 17">
<path d="M0 0 H9 L13 4 V16 H0Z" fill="url(#cg)"/>
<path d="M0.5 15.5 V0.5 H9" stroke="#64bab4" fill="none"/>
<path d="M9 0.5 L12.5 4 V15.5 H0.5" stroke="#4a4e50" fill="none"/>
<path d="M9 1 L12 4 H9Z" fill="#3ab2ae"/>
<path d="M2.8 8.6 L5.2 11.3 L10.3 5.8" stroke="#f00" stroke-width="1.7" fill="none"/></svg>
<div style="position:absolute;left:216px;top:495px;width:212px;height:16px;border:1px solid #858585;background:#fff"></div>
<div style="position:absolute;left:413px;top:495px;width:15px;height:16px;border:1px solid #858585;background:#e3e7ef"></div>
<svg style="left:414px;top:496px" width="16" height="16" viewBox="0 0 16 16"><rect x="3.5" y="4.5" width="8" height="1.2" fill="#0f7f80"/><rect x="3.5" y="7.6" width="8" height="1.2" fill="#0f7f80"/><rect x="3.5" y="10.7" width="8" height="1.2" fill="#0f7f80"/></svg>
<div class="t" style="left:218.50px;top:497.50px;color:#000;font-size:11px;font-weight:normal;letter-spacing:-0.134px;">inlandzk1@meine-firma-homepage.de</div>
<div class="t" style="left:43.00px;top:517.50px;color:#8a8c9a;font-size:11px;font-weight:normal;letter-spacing:-0.257px;">Homepage</div>
<svg style="left:198px;top:517px" width="14" height="17" viewBox="0 0 14 17">
<path d="M0 0 H9 L13 4 V16 H0Z" fill="url(#cg)"/>
<path d="M0.5 15.5 V0.5 H9" stroke="#64bab4" fill="none"/>
<path d="M9 0.5 L12.5 4 V15.5 H0.5" stroke="#4a4e50" fill="none"/>
<path d="M9 1 L12 4 H9Z" fill="#3ab2ae"/>
<path d="M3.8 6.8 L9.2 12.2 M9.2 6.8 L3.8 12.2" stroke="#f00" stroke-width="2.1" fill="none"/></svg>
<div style="position:absolute;left:216px;top:516px;width:212px;height:16px;border:1px solid #858585;background:#fff"></div>
<div style="position:absolute;left:413px;top:516px;width:15px;height:16px;border:1px solid #858585;border-right-color:#000;border-bottom-color:#000;background:#d6d6d6"></div>
<svg style="left:414px;top:517px" width="16" height="16" viewBox="0 0 16 16"><path d="M7.5 3.5 H3.5 V12.5 H7.5" stroke="#f2f2f2" stroke-width="1.5" fill="none"/><path d="M5.5 7 H8.5 V4.5 L12.5 8 L8.5 11.5 V9 H5.5Z" fill="#f2f2f2"/></svg>
<div class="t" style="left:219.50px;top:518.50px;color:#000;font-size:11px;font-weight:normal;letter-spacing:-0.012px;">www.meine-firma-homepage.de</div>
<div style="position:absolute;left:474px;top:133px;width:522px;height:134px;border:1px solid #7a7f88;background:#fff"></div>
<div class="t" style="left:490.50px;top:153.00px;color:#000;font-size:11px;font-weight:bold;letter-spacing:0.450px;-webkit-text-stroke:0">Paul Müller</div>
<div class="t" style="left:490.50px;top:183.00px;color:#000;font-size:11px;font-weight:normal;letter-spacing:-0.086px;">Position</div>
<div class="t" style="left:627.70px;top:183.00px;color:#000;font-size:11px;font-weight:normal;letter-spacing:-0.014px;">Geschäftsführer</div>
<div class="t" style="left:491.50px;top:204.00px;color:#000;font-size:11px;font-weight:normal;letter-spacing:0.283px;">Telefon</div>
<div class="t" style="left:629.00px;top:204.00px;color:#000;font-size:11px;font-weight:normal;letter-spacing:0.000px;">+49 (1234) 56789-01</div>
<div class="t" style="left:490.50px;top:225.00px;color:#000;font-size:11px;font-weight:normal;letter-spacing:0.045px;">Mobiltelefon</div>
<div class="t" style="left:629.00px;top:225.00px;color:#000;font-size:11px;font-weight:normal;letter-spacing:0.041px;">+49 (1235) 1045154</div>
<div class="t" style="left:490.50px;top:246.00px;color:#000;font-size:11px;font-weight:normal;letter-spacing:-0.215px;">E-Mail-Adresse</div>
<div class="t" style="left:626.00px;top:246.00px;color:#000;font-size:11px;font-weight:normal;letter-spacing:-0.125px;">inlandzk1@meine-firma-homepage.de</div>
<div style="position:absolute;left:613px;top:186px;width:4px;height:4px;background:#8c8c8c"></div>
<svg style="left:606px;top:205px" width="15" height="15" viewBox="0 0 15 15"><defs><linearGradient id="sb" x1="0" y1="0" x2="0" y2="1"><stop offset="0" stop-color="#e8eef4"/><stop offset="1" stop-color="#b0bcc8"/></linearGradient></defs>
<ellipse cx="7.5" cy="6" rx="6" ry="4.6" fill="url(#sb)" stroke="#8a96a4" stroke-width="0.9"/><path d="M3.5 9 L2.5 13.5 L6.5 10.2" fill="#c4ccd6" stroke="#8a96a4" stroke-width="0.8"/></svg>
<svg style="left:608px;top:224px" width="10" height="17" viewBox="0 0 10 17"><rect x="2" y="2" width="6" height="13" rx="1.2" fill="#b4b0b8" stroke="#8a7a90" stroke-width="0.8"/><rect x="3" y="5" width="4" height="5" fill="#48c030"/><rect x="5" y="0.5" width="1" height="2" fill="#888"/></svg>
<svg style="left:606px;top:247px" width="15" height="14" viewBox="0 0 15 14"><rect x="1.5" y="3.5" width="11" height="8.5" fill="#eef0f2" stroke="#8c9096"/><path d="M1.5 3.5 L7 8 L12.5 3.5 M1.5 12 L5.5 7.5 M12.5 12 L8.5 7.5" stroke="#9a9ea6" stroke-width="0.8" fill="none"/></svg>
<svg style="left:878px;top:143px" width="97" height="116" viewBox="0 0 97 116"><defs>
<linearGradient id="pbg" x1="0" y1="0" x2="0" y2="1"><stop offset="0" stop-color="#f4f5f8"/><stop offset="0.3" stop-color="#fcfcfd"/><stop offset="1" stop-color="#ffffff"/></linearGradient>
<linearGradient id="skin" x1="0" y1="0" x2="1" y2="0"><stop offset="0" stop-color="#d0a088"/><stop offset="0.35" stop-color="#e8c4ae"/><stop offset="0.7" stop-color="#e0b8a0"/><stop offset="1" stop-color="#c09078"/></linearGradient>
<linearGradient id="hair" x1="0" y1="0" x2="0" y2="1"><stop offset="0" stop-color="#9a7662"/><stop offset="1" stop-color="#c09a84"/></linearGradient>
</defs>
<rect x="0" y="0" width="97" height="116" fill="url(#pbg)"/>
<path d="M0 90 Q18 84 35 76.5 L40 116 H0Z" fill="#1d1c1f"/>
<path d="M74 76.5 Q86 82 97 88.6 V116 H60Z" fill="#1d1c1f"/>
<path d="M34.5 76.5 L74 76.5 L73 116 L36 116Z" fill="#eff1f7"/>
<path d="M34.5 76.5 L38 116 L31 116Z" fill="#2a2a2e"/><path d="M74 76.5 L71 116 L78 116Z" fill="#2a2a2e"/>
<path d="M40 70 L70 70 L69 84 L52 94 L41 84Z" fill="#d8c0b0"/>
<path d="M41 84 L52 94 L46 97Z" fill="#e8eaf2"/><path d="M69 84 L52 94 L60 98Z" fill="#dfe2ec"/>
<path d="M45.5 96.5 L51.5 93 L57.5 96.5 L55.6 116 H48Z" fill="#9cc6ee"/>
<path d="M48 100 L55 100" stroke="#7aaee0" stroke-width="0.8"/>
<ellipse cx="27" cy="48" rx="2.6" ry="6.5" fill="#cf9c80"/><ellipse cx="77.5" cy="45" rx="3.2" ry="9" fill="#d8a88e"/>
<path d="M28 36 Q27 10 50 5.6 Q73 8 75.5 36 L74.5 58 Q72 78 62 84 L45 84 Q35 77 32.5 60Z" fill="url(#skin)"/>
<path d="M28 37 Q27 10 50 5.6 Q73 8 75.5 37 Q74 24 52 20 Q31 23 29 40Z" fill="url(#hair)"/>
<path d="M32.5 58 Q35 78 45 84 L62 84 Q72 77 74.5 58 Q70 64 64 62 Q58 59 52 61 Q44 59 40 62 Q35 63 32.5 58Z" fill="#b0907a" opacity="0.5"/>
<path d="M44 65.5 Q52 68.5 59.5 65.5 Q52 67 44 65.5Z" fill="#c48478" stroke="#b87468" stroke-width="1.2"/>
<path d="M50 51 Q52 57 50.5 58 Q53 59 55 57.5" stroke="#b88066" stroke-width="1" fill="none"/>
<path d="M28.5 40.5 L48 39 L47.5 50 Q40 53 31 52 Z" fill="none" stroke="#302c2c" stroke-width="1.4"/>
<path d="M50.5 39 L71 37.2 L69.5 47.5 Q62 51 52 51 Z" fill="none" stroke="#302c2c" stroke-width="1.4"/>
<path d="M48 40 L50.5 39.5" stroke="#2a2828" stroke-width="1.5"/>
<path d="M71 37.2 L76 35.2" stroke="#e8e8e8" stroke-width="1.8"/>
<path d="M34 43.5 Q39 41.5 45 43.5 M54 42.5 Q60 40.5 66 42.5" stroke="#6a5450" stroke-width="1" fill="none"/><ellipse cx="39.5" cy="46" rx="2.2" ry="1.2" fill="#5a4a48"/><ellipse cx="60" cy="45" rx="2.2" ry="1.2" fill="#5a4a48"/></svg>
</body></html>
